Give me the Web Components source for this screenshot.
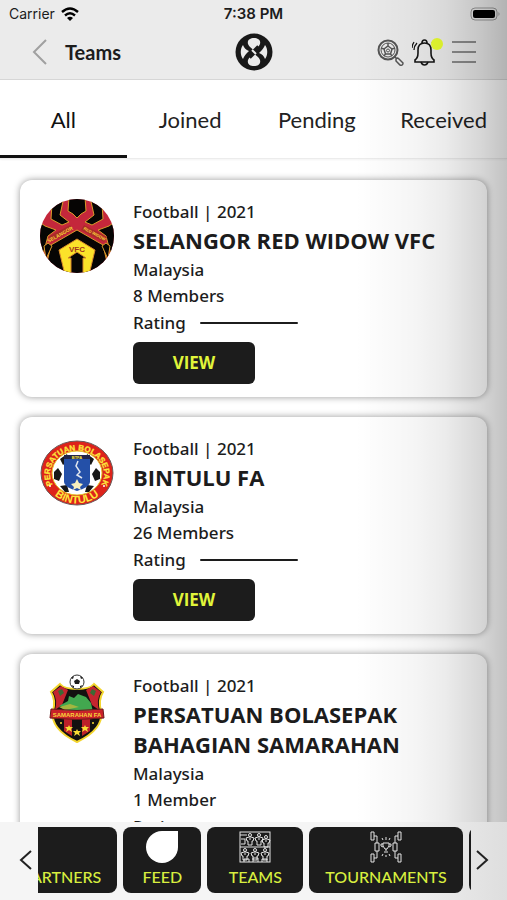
<!DOCTYPE html>
<html lang="en">
<head>
<meta charset="utf-8">
<meta name="viewport" content="width=device-width, initial-scale=1">
<title>Teams</title>
<style>
html, body {
    height: 100%;
    margin: 0;
}

body {
    font-family: "Noto Sans", "Open Sans", sans-serif;
    color: #1c1c1c;
    background: white;
}
</style>
</head>
<body>

<team-app>
    <status-bar slot="top"></status-bar>
    <app-header slot="top" heading="Teams"></app-header>
    <tab-bar slot="top">
        <tab-item selected>All</tab-item>
        <tab-item>Joined</tab-item>
        <tab-item>Pending</tab-item>
        <tab-item>Received</tab-item>
    </tab-bar>

    <team-card sport="Football" year="2021" name="SELANGOR RED WIDOW VFC" country="Malaysia" members="8 Members">
        <svg slot="logo" viewBox="0 0 74 74" role="img" aria-label="Selangor Red Widow crest">
            <defs><clipPath id="disc"><circle cx="37" cy="37" r="37"/></clipPath></defs>
            <g clip-path="url(#disc)">
                <rect width="74" height="74" fill="#c4273b"/>
                <g fill="#060504" stroke="#d99a2b" stroke-width="1">
                    <path d="M29 -2 L28 12 L33 15 L37 19 L41 15 L46 12 L45 -2Z"/>
                    <path d="M24 -2 L20 16 L29 23 L22 26 L11 20 L12 5Z"/>
                    <path d="M50 -2 L54 16 L45 23 L52 26 L63 20 L62 5Z"/>
                    <path d="M-2 22 L5 27 L16 31 L8 37 L4 52 L-2 56Z"/>
                    <path d="M76 22 L69 27 L58 31 L66 37 L70 52 L76 56Z"/>
                    <path d="M37 31 L63 46 L70 76 H4 L11 46Z"/>
                    <path d="M4 47 L8 44 L12 47 L6 60Z M70 47 L66 44 L62 47 L68 60Z"/>
                </g>
                <path d="M19 51 L37 40 L55 51 L49 76 H43 V59 H46 L37 53 L28 59 H31 V76 H25Z" fill="#fbe22a" stroke="#d9872b" stroke-width="1"/>
                <path d="M8 38 L30 26 L33 31 L11 43Z M41 31 L44 26 L67 38 L64 43Z" fill="#a92c27"/>
                <g font-family="Liberation Sans, sans-serif" font-weight="700" fill="#f9d43c" text-anchor="middle">
                    <text font-size="5" transform="translate(21 37) rotate(-29)">SELANGOR</text>
                    <text font-size="4" transform="translate(54 36) rotate(28)">RED WIDOW</text>
                    <text font-size="8" x="37" y="53" fill="#a4341d">VFC</text>
                </g>
            </g>
        </svg>
    </team-card>

    <team-card sport="Football" year="2021" name="BINTULU FA" country="Malaysia" members="26 Members">
        <svg slot="logo" viewBox="0 0 74 74" role="img" aria-label="Bintulu crest">
            <defs>
                <path id="arc-top" d="M14 51 A27 24 0 1 1 60 51"/>
                <path id="arc-bottom" d="M5 44 A33 31 0 0 0 69 44"/>
            </defs>
            <ellipse cx="37" cy="37" rx="36" ry="32" fill="#dd231b" stroke="#6a5b5b"/>
            <ellipse cx="37" cy="37" rx="25" ry="22" fill="white" stroke="#e6c628" stroke-width="1"/>
            <g fill="#181818">
                <path d="M20 23 L27 18 L29 24 L23 29Z M14 36 L18 32 L22 38 L19 45 L14 43Z M20 50 L27 49 L29 56 L25 56Z"/>
                <path d="M54 23 L47 18 L46 24 L51 29Z M60 36 L56 32 L52 38 L55 45 L60 43Z M54 50 L47 49 L45 56 L49 56Z"/>
            </g>
            <path d="M24 19 H50 V46 Q50 51 37 55 Q24 51 24 46Z" fill="#2450a8"/>
            <path d="M24 19 H50 V23 H24Z" fill="#22264a"/>
            <path d="M38 25 L36 30 L40 36 L37 39 L42 42" fill="none" stroke="#dfe5ee" stroke-width="1.500"/>
            <path d="M37 43 L39 47 L43 48 L40 51 L41 54 L37 52 L33 54 L34 51 L31 48 L35 47Z" fill="#f7efbd"/>
            <g font-family="Liberation Sans, sans-serif" font-weight="700" fill="#fde83c">
                <text font-size="8" stroke="#fde83c" stroke-width="0.3"><textPath href="#arc-top" startOffset="50%" text-anchor="middle">PERSATUAN BOLASEPAK</textPath></text>
                <text font-size="11"><textPath href="#arc-bottom" startOffset="50%" text-anchor="middle">BINTULU</textPath></text>
                <text font-size="4" x="37" y="23" text-anchor="middle">BTFA</text>
            </g>
            <circle cx="10" cy="50" r="1" fill="white"/>
            <circle cx="64" cy="50" r="1" fill="white"/>
        </svg>
    </team-card>

    <team-card sport="Football" year="2021" name="PERSATUAN BOLASEPAK BAHAGIAN SAMARAHAN" country="Malaysia" members="1 Member">
        <svg slot="logo" viewBox="0 0 74 74" role="img" aria-label="Samarahan crest">
            <path d="M20 11 Q24 16 37 16 Q50 16 54 11 L63 19 Q58 27 61 38 Q64 56 37 69 Q10 56 13 38 Q16 27 11 19Z" fill="#131110" stroke="#f3d52d" stroke-width="2"/>
            <path d="M21 13 L28 17 L22 32 L15 37 Q18 27 13 19Z M53 13 L46 17 L52 32 L59 37 Q56 27 61 19Z" fill="#c5252f"/>
            <path d="M18 18 L22 16 L24 20 L20 23Z M56 18 L52 16 L50 20 L54 23Z" fill="#3d6a35"/>
            <path d="M24 46 H32 V63 L24 58Z M42 46 H50 V58 L42 63Z" fill="#bd1f29"/>
            <path d="M19 33 L28 28 L29 23 L34 25 L38 21 L46 24 L51 30 L53 39 H20 L27 35Z" fill="#42a84f"/>
            <path d="M19 34 L30 31 L39 34 L25 37Z" fill="#a4b640"/>
            <path d="M11 36 Q37 39 63 36 L64 45 Q37 48 10 45Z" fill="#c9212a" stroke="#6c1a1a"/>
            <text x="37" y="44" font-family="Liberation Sans, sans-serif" font-weight="700" font-size="6" text-anchor="middle" fill="#f8d63a">SAMARAHAN FA</text>
            <g fill="#f9dc35">
                <path id="star" d="M37 56 L38 58 L41 58 L39 60 L40 63 L37 61 L34 63 L35 60 L33 58 L36 58Z"/>
                <use href="#star" x="-8" y="-4"/>
                <use href="#star" x="8" y="-4"/>
                <circle cx="21" cy="50" r="1"/>
                <circle cx="53" cy="50" r="1"/>
            </g>
            <circle cx="37" cy="9" r="7" fill="white" stroke="#333"/>
            <path d="M37 6 L40 8 L39 11 L35 11 L34 8Z M31 5 L34 3 L33 6Z M43 5 L40 3 L41 6Z M31 12 L34 13 L34 15Z M43 12 L40 13 L40 15Z" fill="#1b1b1b"/>
        </svg>
    </team-card>

    <bottom-nav slot="bottom">
        <nav-tile>PARTNERS</nav-tile>
        <nav-tile compact>FEED
            <svg slot="icon" viewBox="0 0 32 32"><path d="M16 0 H32 V16 A16 16 0 1 1 16 0Z" fill="white"/></svg>
        </nav-tile>
        <nav-tile>TEAMS
            <svg slot="icon" viewBox="0 0 32 32" fill="none" stroke="#e4e4e4">
                <defs>
                    <g id="player"><circle cx="4" cy="2" r="1.5"/><path d="M0 5 L3 4 H5 L8 5 L7 8 H6 V12 H2 V8 H1Z M3 6 H5"/></g>
                </defs>
                <rect x="1" y="1" width="30" height="30"/>
                <path d="M1 16 H31 M1 4 H8"/>
                <use href="#player" x="7" y="2"/><use href="#player" x="16" y="2"/><use href="#player" x="23" y="4"/>
                <use href="#player" x="2" y="17"/><use href="#player" x="12" y="17"/><use href="#player" x="22" y="17"/>
                <path d="M5 31 V28 H10 V31 M14 31 V27 H19 V31 M23 31 V28 H28 V31 M2 8 H6 V13 H2"/>
            </svg>
        </nav-tile>
        <nav-tile>TOURNAMENTS
            <svg slot="icon" viewBox="0 0 32 32" fill="none" stroke="#e4e4e4">
                <path d="M1 1 H4 V9 H1Z M28 1 H31 V9 H28Z M1 23 H4 V31 H1Z M28 23 H31 V31 H28Z M5 12 H9 V20 H5Z M23 12 H27 V20 H23Z"/>
                <path d="M4 5 H7 V12 M28 5 H25 V12 M4 27 H7 V20 M28 27 H25 V20"/>
                <path d="M13 12 H19 V15 L17 18 H15 L13 15Z M13 13 H11 V15 L13 16 M19 13 H21 V15 L19 16 M16 18 V20 M14 21 H18"/>
                <path d="M16 6 V9 M12 7 L13 9 M20 7 L19 9 M16 24 V26 M12 25 L13 23 M20 25 L19 23"/>
            </svg>
        </nav-tile>
        <nav-tile></nav-tile>
    </bottom-nav>
</team-app>

<script>
// shared base: clones the html into an open shadow root
class BaseElement extends HTMLElement {

    constructor() {
        super();
        const template = document.createElement('template');
        template.innerHTML = this.constructor.html;
        this.attachShadow({ mode: 'open' }).appendChild(template.content.cloneNode(true));
    }

    $(selector) {
        return this.shadowRoot.querySelector(selector);
    }
}

customElements.define('team-app', class TeamApp extends BaseElement {
    static html = `<style>
:host {
    display: flex;
    flex-direction: column;
    height: 100vh;
    overflow: hidden;
    position: relative;
}

main {
    flex: 1;
    min-height: 0;
    overflow: hidden auto;
    scrollbar-width: none;
    display: flex;
    flex-direction: column;
    gap: 20px;
    padding: 21px 20px;
}

::slotted(team-card) {
    flex: none;
}

/* soft shade of the side drawer, over everything but the bottom bar */
.shade {
    position: absolute;
    inset: 0;
    pointer-events: none;
    background: linear-gradient(to right, transparent 70%, rgb(0,0,0,0.04) 82%, rgb(0,0,0,0.08) 88%, rgb(0,0,0,0.16) 95%, rgb(0,0,0,0.24));
    z-index: 1;
}
</style>
<slot name="top"></slot>
<main><slot></slot></main>
<slot name="bottom"></slot>
<div class="shade"></div>`;
});

customElements.define('status-bar', class StatusBar extends BaseElement {
    static html = `<style>
:host {
    display: grid;
    grid-template-columns: 1fr auto 1fr;
    align-items: center;
    height: 28px;
    padding: 0 6px;
    background: #ebebeb;
    font: 14px/20px Inter, sans-serif;
}

.carrier {
    display: flex;
    align-items: center;
    gap: 6px;
    padding-left: 3px;
}

time {
    font-size: 15px;
    font-weight: 600;
}

.battery {
    justify-self: end;
}

svg {
    display: block;
}
</style>
<span class="carrier">Carrier
    <svg width="18" height="14" viewBox="0 0 18 14" fill="none" stroke="black" stroke-width="2.4">
        <path d="M1 5 Q9 -2 17 5"/><path d="M4 8.500 Q9 4 14 8.500"/><path d="M9 14 L6 11 Q9 8.500 12 11Z" fill="black" stroke="none"/>
    </svg>
</span>
<time>7:38 PM</time>
<svg class="battery" width="31" height="14" viewBox="0 0 31 14">
    <rect x="1" y="1" width="26" height="12" rx="4" fill="none" stroke="#999"/>
    <rect x="3" y="3" width="22" height="8" rx="2"/>
    <path d="M28.500 5 Q30.500 7 28.500 9Z" fill="#999"/>
</svg>`;
});

customElements.define('app-header', class AppHeader extends BaseElement {
    static html = `<style>
:host {
    display: grid;
    grid-template-columns: 1fr auto 1fr;
    align-items: center;
    height: 48px;
    padding: 0 31px 3px;
    background: #ebebeb;
    border-bottom: 1px solid #d6d6d6;
}

.left, .right {
    display: flex;
    align-items: center;
}

.left {
    gap: 18px;
}

.right {
    justify-content: flex-end;
    gap: 8px;
}

h1 {
    margin: 0;
    font: 700 20px/24px Lato, sans-serif;
}

button {
    border: 0;
    padding: 0;
    background: none;
    cursor: pointer;
}

svg {
    display: block;
}
</style>
<div class="left">
    <button aria-label="Back">
        <svg width="16" height="28" viewBox="0 0 16 28" fill="none" stroke="#a0a0a0" stroke-width="2"><path d="M15 2 L3 14 L15 26"/></svg>
    </button>
    <h1></h1>
</div>
<svg width="38" height="38" viewBox="0 0 38 38">
    <circle cx="19" cy="19" r="18.500" fill="#191919"/>
    <g fill="#ebebeb">
        <path d="M19 5 C23 5 26 7 25 11 C24 14 21 15 19 18 C17 15 14 14 13 11 C12 7 15 5 19 5Z"/>
        <path d="M19 33 C23 33 26 31 25 27 C24 24 21 23 19 20 C17 23 14 24 13 27 C12 31 15 33 19 33Z"/>
        <path d="M8 12 C9 15 11 17 14 18 C11 21 9 23 8 26 C5 22 5 16 8 12Z"/>
        <path d="M30 12 C29 15 27 17 24 20 C27 21 29 23 30 26 C33 22 33 16 30 12Z"/>
    </g>
    <path d="M14 24 L24 14" stroke="#191919" stroke-width="5"/>
    <path d="M17 17 L21 21" stroke="#ebebeb" stroke-width="2"/>
</svg>
<div class="right">
    <button aria-label="Search">
        <svg width="27" height="27" viewBox="0 0 27 27" fill="none" stroke="#555">
            <circle cx="11" cy="11" r="9.500" stroke-width="2"/>
            <circle cx="11" cy="11" r="7"/>
            <path d="M11 7 L15 10 L13.500 15 H8.500 L7 10Z M11 7 V4 M15 10 L18 9 M13.500 15 L15 17 M8.500 15 L7 17 M7 10 L4 9" stroke-width="1.500"/>
            <circle cx="11" cy="11.500" r="1.500"/>
            <path d="M17 17 L20 20 M19 20 Q20 18 22 20 L26 24 Q26 27 23 26 L19 22Z" stroke-width="1.500"/>
        </svg>
    </button>
    <button aria-label="Notifications">
        <svg width="32" height="28" viewBox="0 0 32 28" fill="none" stroke="#151515" stroke-width="1.600">
            <path d="M3 24 V22 Q6 20 6 15 V12 Q6 5 12.500 5 Q19 5 19 12 V15 Q19 20 22 22 V24Z"/>
            <path d="M10 5 Q10 2 12.500 2 Q15 2 15 5"/>
            <path d="M9 24 Q10 27 12.500 27 Q15 27 16 24"/>
            <path d="M5 5 Q2 8 2 12 M2 4 Q0 7 0 10 M20 4 Q23 7 23 11" stroke-width="1.300"/>
            <circle cx="25" cy="6" r="6" fill="#eaff30" stroke="none"/>
        </svg>
    </button>
    <button aria-label="Menu">
        <svg width="24" height="24" viewBox="0 0 24 24" stroke="#8c8c8c" stroke-width="2"><path d="M0 2 H24 M0 12 H24 M0 22 H24"/></svg>
    </button>
</div>`;

    connectedCallback() {
        this.$('h1').textContent = this.getAttribute('heading');
    }
});

customElements.define('tab-bar', class TabBar extends BaseElement {
    static html = `<style>
:host {
    display: grid;
    grid-auto-flow: column;
    grid-auto-columns: 1fr;
    background: white;
    border-bottom: 1px solid #ececec;
    box-shadow: 0 1px 2px rgb(0,0,0,0.05);
}
</style>
<slot></slot>`;
});

customElements.define('tab-item', class TabItem extends BaseElement {
    static html = `<style>
:host {
    display: block;
}

button {
    display: block;
    width: 100%;
    height: 78px;
    padding: 4px 0 0;
    border: 0;
    border-bottom: 3px solid transparent;
    background: none;
    color: #222;
    font: 22px/26px Lato, sans-serif;
    cursor: pointer;
}

:host([selected]) button {
    border-color: #111;
    color: #111;
}
</style>
<button><slot></slot></button>`;
});

customElements.define('team-card', class TeamCard extends BaseElement {
    static html = `<style>
:host {
    display: grid;
    grid-template-columns: 74px 1fr;
    column-gap: 19px;
    padding: 19px 20px 13px;
    border-radius: 12px;
    background: white;
    box-shadow: 0 0 7px rgb(0,0,0,0.4);
    font-size: 17px;
    line-height: 26px;
    font-weight: 500;
}

::slotted(svg) {
    display: block;
    width: 74px;
    height: 74px;
}

h2 {
    margin: 0 0 2px;
    font-family: "Open Sans", sans-serif;
    font-size: 22px;
    line-height: 30px;
    font-weight: 700;
}

p {
    margin: 0;
}

.rating {
    display: flex;
    align-items: center;
    gap: 14px;
    height: 28px;
}

.line {
    width: 98px;
    height: 2px;
    border-radius: 1px;
    background: #1c1c1c;
}

button {
    width: 122px;
    height: 42px;
    margin-top: 5px;
    border: 0;
    border-radius: 6px;
    background: #1c1c1c;
    color: #e0f53a;
    font: 700 17px/24px "Open Sans", sans-serif;
    cursor: pointer;
}
</style>
<slot name="logo"></slot>
<div>
    <p class="sport"></p>
    <h2></h2>
    <p class="country"></p>
    <p class="members"></p>
    <div class="rating">Rating <span class="line"></span></div>
    <button>VIEW</button>
</div>`;

    connectedCallback() {
        this.$('.sport').textContent = this.getAttribute('sport') + ' | ' + this.getAttribute('year');
        this.$('h2').textContent = this.getAttribute('name');
        this.$('.country').textContent = this.getAttribute('country');
        this.$('.members').textContent = this.getAttribute('members');
    }
});

customElements.define('nav-tile', class NavTile extends BaseElement {
    static html = `<style>
:host {
    display: block;
    flex: none;
}

a {
    display: flex;
    flex-direction: column;
    align-items: center;
    justify-content: flex-end;
    box-sizing: border-box;
    min-width: 96px;
    height: 66px;
    padding: 0 16px 5px;
    border-radius: 8px;
    background: #1c1c1c;
    color: #d8ef3f;
    font: 500 16px/22px Lato, sans-serif;
    text-decoration: none;
}

:host([compact]) a {
    min-width: 78px;
}

::slotted(svg) {
    display: block;
    width: 32px;
    height: 32px;
    margin-bottom: 3px;
}
</style>
<a href="#"><slot name="icon"></slot><span><slot></slot></span></a>`;
});

// defined after nav-tile: the tiles need their widths before the track can scroll
customElements.define('bottom-nav', class BottomNav extends BaseElement {
    static html = `<style>
:host {
    display: flex;
    align-items: center;
    box-sizing: border-box;
    height: 78px;
    padding-bottom: 2px;
    background: linear-gradient(to right, #f5f5f5 75%, #dedede);
    position: relative;
    z-index: 2;
}

.arrow {
    flex: none;
    width: 38px;
    height: 66px;
    border: 0;
    padding: 0 0 0 14px;
    background: none;
    cursor: pointer;
}

.next {
    width: 36px;
    padding: 0 14px 0 0;
}

svg {
    display: block;
    margin: auto;
}

.track {
    flex: 1;
    min-width: 0;
    display: flex;
    gap: 6px;
    overflow: auto hidden;
    scrollbar-width: none;
}
</style>
<button class="arrow" aria-label="Previous">
    <svg width="14" height="22" viewBox="0 0 14 22" fill="none" stroke="#222" stroke-width="2"><path d="M12 2 L2 11 L12 20"/></svg>
</button>
<div class="track"><slot></slot></div>
<button class="arrow next" aria-label="Next">
    <svg width="14" height="22" viewBox="0 0 14 22" fill="none" stroke="#222" stroke-width="2"><path d="M2 2 L12 11 L2 20"/></svg>
</button>`;

    connectedCallback() {
        // start a little way into the list
        this.$('.track').scrollLeft = 32;
    }
});
</script>
</body>
</html>
